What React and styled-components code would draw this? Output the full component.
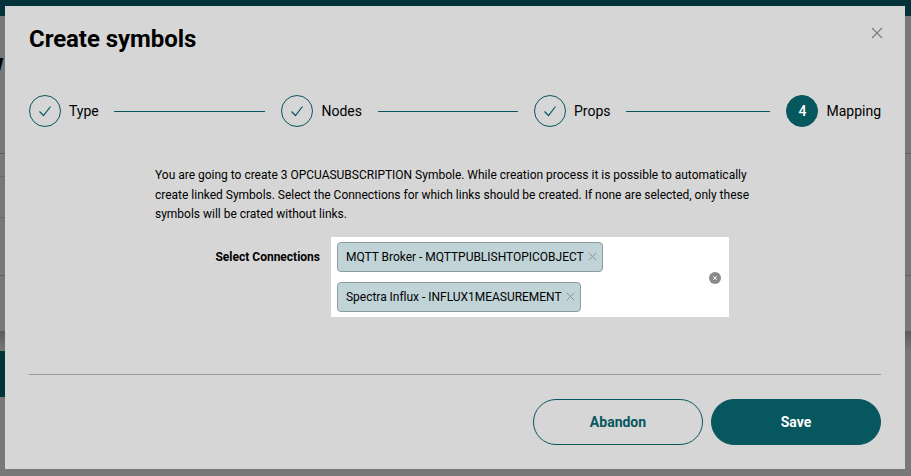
import React from "react";
import styled, { createGlobalStyle } from "styled-components";

const Global = createGlobalStyle`
  html, body { margin: 0; padding: 0; height: 100%; overflow: hidden; }
  body {
    font-family: Roboto, "Liberation Sans", sans-serif;
    background: #757575;
  }
`;

const Page = styled.div`
  width: 911px;
  height: 476px;
  overflow: hidden;
  position: relative;
  background: #787878;
`;
const TopBar = styled.div`
  height: 16px;
  background: #02323a;
`;
const PageHeading = styled.div`
  height: 138px;
  box-sizing: border-box;
  padding-top: 33px;
  font-size: 24px;
  line-height: 28px;
  font-weight: 700;
  color: #000;
  margin-left: -14px;
  border-bottom: 1px solid #5f5f5f;
`;
const PageRow = styled.div`
  height: ${(p) => p.$h}px;
  box-sizing: border-box;
  margin-right: ${(p) => p.$inset || 0}px;
  border-bottom: 1px solid ${(p) => p.$line};
`;
const Shade = styled.div`
  height: 20px;
  background: linear-gradient(#5c5c5c, #787878);
`;
const PageBlock = styled.div`
  width: 400px;
  height: 46px;
  background: #02323a;
`;

const Backdrop = styled.div`
  position: absolute;
  inset: 0;
`;
const Modal = styled.div`
  position: absolute;
  left: 5px;
  top: 6px;
  width: 900px;
  height: 463px;
  box-sizing: border-box;
  background: #d6d6d6;
  padding: 0 24px;
  display: flex;
  flex-direction: column;
`;
const Title = styled.h2`
  margin: 19px 0 0;
  height: 28px;
  font-size: 24px;
  line-height: 28px;
  font-weight: 700;
  letter-spacing: -0.05px;
  color: #000;
`;
const Close = styled.button`
  position: absolute;
  top: 21px;
  right: 22px;
  width: 12px;
  height: 12px;
  padding: 0;
  border: 0;
  background: none;
  color: #808080;
  display: flex;
`;
const Stepper = styled.div`
  margin-top: 42px;
  display: flex;
  align-items: center;
  height: 32px;
`;
const Step = styled.div`
  flex: ${(p) => (p.$last ? "none" : "1 1 0")};
  display: flex;
  align-items: center;
  font-size: 14px;
  color: #000;
  white-space: nowrap;
`;
const StepLabel = styled.span`
  margin-left: 8px;
`;
const Bubble = styled.div`
  width: 32px;
  height: 32px;
  box-sizing: border-box;
  border-radius: 50%;
  border: 1px solid #07575f;
  background: ${(p) => (p.$active ? "#07575f" : "transparent")};
  color: #fff;
  font-size: 14px;
  font-weight: 500;
  display: flex;
  align-items: center;
  justify-content: center;
`;
const Connector = styled.div`
  flex: 1;
  height: 1px;
  background: #07575f;
  margin: 0 16px 0 15.5px;
`;
const Body = styled.div`
  width: 600px;
  margin: 39px auto 0;
`;
const Intro = styled.p`
  margin: 0;
  font-size: 12px;
  line-height: 19.5px;
  letter-spacing: -0.01px;
  color: #000;
`;
const Row = styled.div`
  margin-top: 12px;
  display: flex;
  align-items: flex-start;
  gap: 11px;
`;
const Label = styled.div`
  width: 165px;
  text-align: right;
  font-size: 12px;
  font-weight: 700;
  line-height: 14px;
  padding-top: 13px;
  color: #000;
`;
const Field = styled.div`
  position: relative;
  width: 398px;
  height: 80px;
  box-sizing: border-box;
  background: #fff;
  padding: 5px 6px;
  display: flex;
  flex-direction: column;
  align-items: flex-start;
  gap: 10px;
`;
const Tag = styled.div`
  height: 30px;
  box-sizing: border-box;
  display: flex;
  align-items: center;
  gap: 4px;
  padding: 0 5px 0 8px;
  border: 1px solid #8e9a9c;
  border-radius: 4px;
  background: #c0d4d8;
  font-size: 12px;
  letter-spacing: -0.02px;
  color: #000;
  white-space: nowrap;
`;
const TagX = styled.span`
  color: #8f8f8f;
  display: flex;
`;
const Clear = styled.span`
  position: absolute;
  right: 8px;
  top: 35px;
  width: 12px;
  height: 12px;
  display: flex;
`;
const Divider = styled.div`
  margin-top: 57px;
  height: 1px;
  background: #9a9a9a;
`;
const Actions = styled.div`
  margin-top: 24px;
  display: flex;
  justify-content: flex-end;
  gap: 8px;
`;
const Btn = styled.button`
  width: 170px;
  height: 46px;
  box-sizing: border-box;
  border-radius: 23px;
  border: 1px solid #07575f;
  background: ${(p) => (p.$primary ? "#07575f" : "transparent")};
  color: ${(p) => (p.$primary ? "#fff" : "#07575f")};
  font-family: inherit;
  font-size: 14px;
  font-weight: 700;
`;

const Check = () => (
  <svg width="16" height="16" viewBox="0 0 16 16" fill="none" stroke="#07575f" strokeWidth="1.2">
    <path d="M2.5 8.5 L6.5 12.5 L13.5 3.5" />
  </svg>
);
const Cross = ({ size }) => (
  <svg width={size} height={size} viewBox="0 0 12 12" fill="none" stroke="currentColor" strokeWidth="1.3">
    <path d="M1 1 L11 11 M11 1 L1 11" />
  </svg>
);

const steps = ["Type", "Nodes", "Props"];

export default function App() {
  return (
    <Page>
      <Global />
      <TopBar />
      <PageHeading>w</PageHeading>
      <PageRow $h={23} $line="#6a6a6a" $inset={100} />
      <PageRow $h={41} $line="#6a6a6a" $inset={100} />
      <PageRow $h={58} $line="#5f5f5f" />
      <PageRow $h={55} $line="transparent" />
      <Shade />
      <PageBlock />
      <Backdrop>
        <Modal>
          <Title>Create symbols</Title>
          <Close aria-label="Close">
            <Cross size={12} />
          </Close>
          <Stepper>
            {steps.map((s) => (
              <Step key={s}>
                <Bubble>
                  <Check />
                </Bubble>
                <StepLabel>{s}</StepLabel>
                <Connector />
              </Step>
            ))}
            <Step $last>
              <Bubble $active>4</Bubble>
              <StepLabel>Mapping</StepLabel>
            </Step>
          </Stepper>
          <Body>
            <Intro>
              You are going to create 3 OPCUASUBSCRIPTION Symbole. While creation process it is possible to
              automatically create linked Symbols. Select the Connections for which links should be created. If none
              are selected, only these symbols will be crated without links.
            </Intro>
            <Row>
              <Label>Select Connections</Label>
              <Field>
                <Tag>
                  MQTT Broker - MQTTPUBLISHTOPICOBJECT
                  <TagX>
                    <Cross size={9} />
                  </TagX>
                </Tag>
                <Tag>
                  Spectra Influx - INFLUX1MEASUREMENT
                  <TagX>
                    <Cross size={9} />
                  </TagX>
                </Tag>
                <Clear>
                  <svg width="12" height="12" viewBox="0 0 12 12">
                    <circle cx="6" cy="6" r="6" fill="#8a8a8a" />
                    <path d="M4.2 4.2 L7.8 7.8 M7.8 4.2 L4.2 7.8" stroke="#fff" strokeWidth="1" />
                  </svg>
                </Clear>
              </Field>
            </Row>
          </Body>
          <Divider />
          <Actions>
            <Btn>Abandon</Btn>
            <Btn $primary>Save</Btn>
          </Actions>
        </Modal>
      </Backdrop>
    </Page>
  );
}
